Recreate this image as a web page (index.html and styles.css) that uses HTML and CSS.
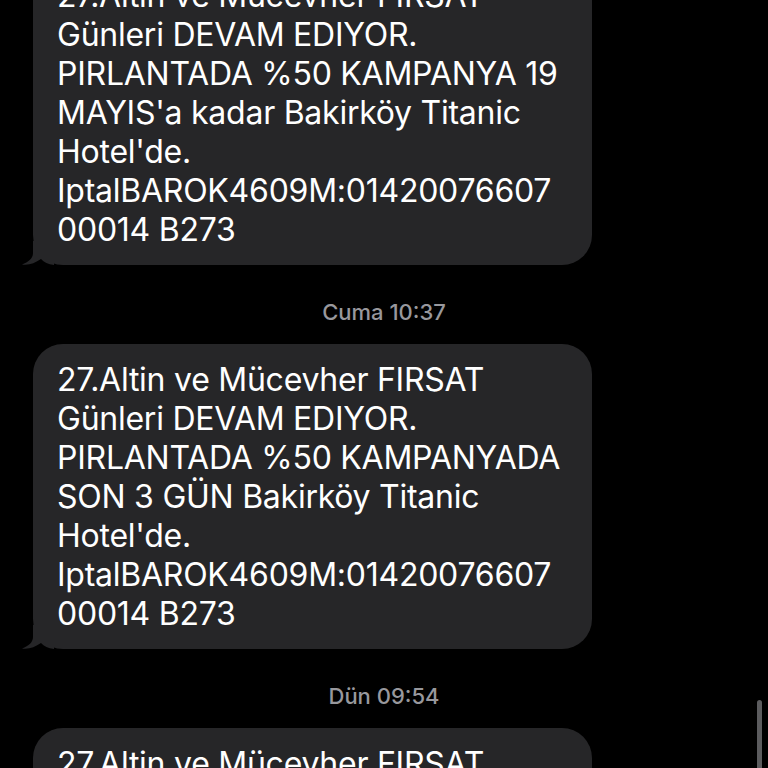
FILE: index.html
```html
<!DOCTYPE html>
<html lang="tr">
<head>
<meta charset="utf-8">
<title>Mesajlar</title>
<link rel="stylesheet" href="styles.css">
</head>
<body>
<div class="thread">
  <div class="bubble first">
    <div class="text">27.Altin ve Mücevher FIRSAT<br>Günleri DEVAM EDIYOR.<br>PIRLANTADA %50 KAMPANYA 19<br>MAYIS'a kadar Bakirköy Titanic<br>Hotel'de.<br>IptalBAROK4609M:01420076607<br>00014 B273</div>
    <svg class="tail" width="32" height="24" viewBox="0 0 32 24"><path d="M11 0 V12 C11 17 7 21 0 23.5 C7 24.5 13 22 19 18 C22 21 26 23.5 32 24 V0 Z"/></svg>
  </div>
  <div class="stamp"><span class="day">Cuma</span> 10:37</div>
  <div class="bubble">
    <div class="text">27.Altin ve Mücevher FIRSAT<br>Günleri DEVAM EDIYOR.<br>PIRLANTADA %50 KAMPANYADA<br>SON 3 GÜN Bakirköy Titanic<br>Hotel'de.<br>IptalBAROK4609M:01420076607<br>00014 B273</div>
    <svg class="tail" width="32" height="24" viewBox="0 0 32 24"><path d="M11 0 V12 C11 17 7 21 0 23.5 C7 24.5 13 22 19 18 C22 21 26 23.5 32 24 V0 Z"/></svg>
  </div>
  <div class="stamp"><span class="day">Dün</span> 09:54</div>
  <div class="bubble">
    <div class="text">27.Altin ve Mücevher FIRSAT<br>Günleri DEVAM EDIYOR.</div>
  </div>
</div>
<div class="scrollbar"></div>
</body>
</html>
```
FILE: styles.css
```css
html, body {
  margin: 0;
  padding: 0;
  background: #000;
  height: 768px;
  overflow: hidden;
}
body {
  font-family: Inter, "Noto Sans", sans-serif;
  position: relative;
}
.thread {
  display: flex;
  flex-direction: column;
  align-items: flex-start;
}
.bubble {
  position: relative;
  margin-left: 33px;
  width: 559px;
  box-sizing: border-box;
  padding: 16px 24px 16px;
  background: #262628;
  border-radius: 30px;
  color: #fff;
  font-size: 32px;
  letter-spacing: -0.25px;
  line-height: 39px;
  white-space: nowrap;
}
.bubble.first {
  margin-top: -40px;
}
.tail {
  position: absolute;
  left: -11px;
  bottom: 0;
  fill: #262628;
}
.stamp {
  align-self: stretch;
  text-align: center;
  color: #98989d;
  font-size: 22px;
  line-height: 22px;
  font-weight: 500;
  margin: 36px 0 21px;
}
.scrollbar {
  position: absolute;
  right: 6px;
  top: 700px;
  width: 5px;
  height: 90px;
  border-radius: 3px;
  background: #5c5c5e;
}
```
